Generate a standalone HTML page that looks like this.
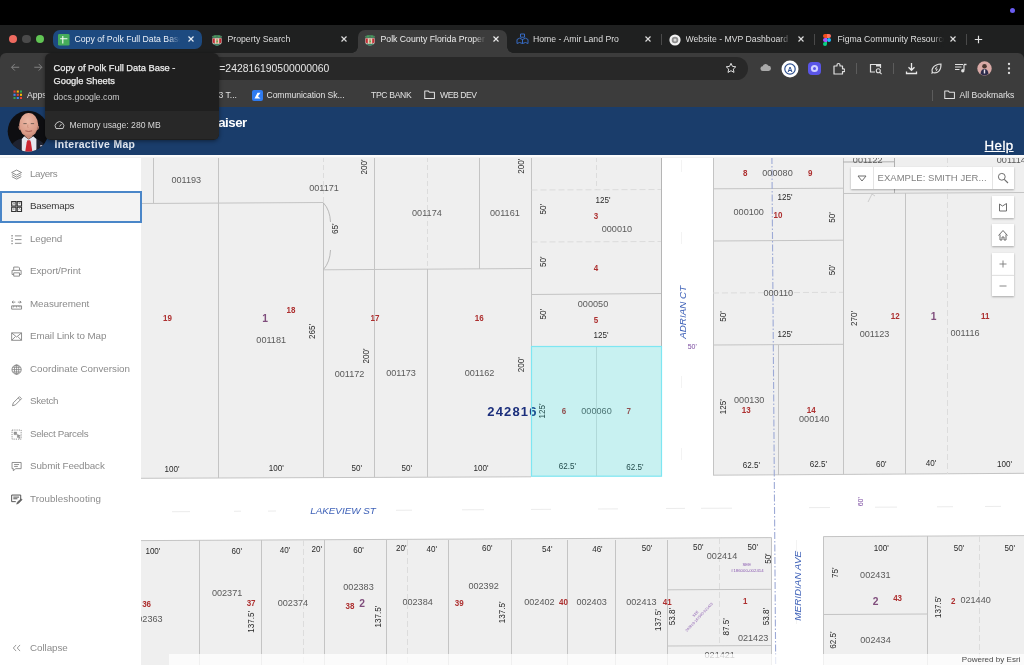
<!DOCTYPE html>
<html lang="en"><head><meta charset="utf-8"><title>Polk County Florida Property Appraiser - Interactive Map</title>
<style>
html,body{margin:0;padding:0;background:#fff;}
body{-webkit-font-smoothing:antialiased;width:1024px;height:665px;overflow:hidden;position:relative;font-family:"Liberation Sans",sans-serif;}
#root{position:absolute;left:0;top:0;width:1024px;height:665px;overflow:hidden;will-change:transform;}
.abs{position:absolute;}
#map{position:absolute;left:0;top:0;width:1024px;height:665px;}
#map text{font-family:"Liberation Sans",sans-serif;text-anchor:middle;}
.pn{font-size:9.6px;fill:#5a5a5a;}
.dm{font-size:8.6px;fill:#2a2a2a;}
.rd{font-size:9.2px;font-weight:bold;fill:#ad2f2f;}
.bk{font-size:10.8px;font-weight:bold;fill:#7f4d7c;}
.big{font-size:13px;font-weight:bold;fill:#1c2f7c;letter-spacing:1.15px;}
.st{font-size:9.85px;font-style:italic;fill:#3f62b8;}
.pw{font-size:7px;fill:#7a4aa0;}
.tiny{font-size:4.3px;fill:#8a5ab0;}
.tiny2{font-size:3.6px;fill:#8a5ab0;}
#side{position:absolute;left:0;top:157.5px;width:141px;height:508px;background:#fff;}
.sel{position:absolute;left:0;top:190.5px;width:137.5px;height:28px;border:2px solid #4a86c8;background:#f3f3f3;}
.sic{position:absolute;left:9.7px;}
.sit{position:absolute;left:30px;font:9.8px/16px "Liberation Sans",sans-serif;white-space:nowrap;}
.tab{position:absolute;top:33px;height:13px;font:8.7px/13px "Liberation Sans",sans-serif;color:#dedede;white-space:nowrap;overflow:hidden;}
.url{font:10.4px/13px "Liberation Sans",sans-serif;color:#e6e6e6;white-space:nowrap;}
.bm{position:absolute;top:89px;font:8.6px/12px "Liberation Sans",sans-serif;color:#e2e2e2;white-space:nowrap;}
.btn{position:absolute;left:992px;width:22px;height:22px;background:#fff;box-shadow:0 1px 2px rgba(0,0,0,.3);}
.btn svg{display:block;}
</style></head>
<body>
<div id="root">
<svg id="map" width="1024" height="665" viewBox="0 0 1024 665">
<rect x="0" y="155" width="1024" height="510" fill="#ffffff"/>
<polygon points="141,157 661,157 661,476.3 141,478.3" fill="#efefef" />
<polygon points="713,157 1024,157 1024,473.5 713,475" fill="#efefef" />
<polygon points="141,540.5 771.5,537.5 771.5,665 141,665" fill="#efefef" />
<polygon points="823.5,536.6 1024,535.6 1024,665 823.5,665" fill="#efefef" />
<line x1="596.5" y1="347" x2="596.5" y2="476" stroke="#d2d2d2" stroke-width="1"/>
<line x1="141" y1="478.3" x2="531" y2="476.8" stroke="#c4c4c4" stroke-width="1"/>
<line x1="153.5" y1="157" x2="153.5" y2="203" stroke="#c4c4c4" stroke-width="1"/>
<line x1="218.5" y1="157" x2="218.5" y2="478" stroke="#c4c4c4" stroke-width="1"/>
<line x1="141" y1="203.5" x2="323.5" y2="202.5" stroke="#c4c4c4" stroke-width="1"/>
<line x1="323.5" y1="157" x2="323.5" y2="203" stroke="#dcdcdc" stroke-width="1" stroke-dasharray="5 3"/>
<line x1="323.5" y1="203" x2="323.5" y2="477.5" stroke="#c4c4c4" stroke-width="1"/>
<path d="M323.5 203 Q330 210 330.5 222 M330.5 250 Q330 262 323.5 269.5" fill="none" stroke="#aaaaaa" stroke-width="0.8"/>
<line x1="323.5" y1="269.8" x2="531" y2="268.5" stroke="#c4c4c4" stroke-width="1"/>
<line x1="374.5" y1="157" x2="374.5" y2="477.3" stroke="#c4c4c4" stroke-width="1"/>
<line x1="427.5" y1="157" x2="427.5" y2="269" stroke="#dcdcdc" stroke-width="1" stroke-dasharray="5 3"/>
<line x1="427.5" y1="269" x2="427.5" y2="477" stroke="#c4c4c4" stroke-width="1"/>
<line x1="479.5" y1="157" x2="479.5" y2="269" stroke="#c4c4c4" stroke-width="1"/>
<line x1="531.5" y1="157" x2="531.5" y2="346" stroke="#c4c4c4" stroke-width="1"/>
<line x1="531.5" y1="190" x2="661" y2="189.5" stroke="#dcdcdc" stroke-width="1" stroke-dasharray="6 3"/>
<line x1="531.5" y1="242" x2="661" y2="241.5" stroke="#dcdcdc" stroke-width="1" stroke-dasharray="6 3"/>
<line x1="531.5" y1="294.5" x2="661" y2="293.5" stroke="#c4c4c4" stroke-width="1"/>
<line x1="596.5" y1="157" x2="596.5" y2="190" stroke="#dcdcdc" stroke-width="1" stroke-dasharray="5 3"/>
<line x1="661.5" y1="157" x2="661.5" y2="346" stroke="#b5b5b5" stroke-width="1"/>
<line x1="713.5" y1="157" x2="713.5" y2="475" stroke="#c4c4c4" stroke-width="1"/>
<line x1="713" y1="188.8" x2="843" y2="188.2" stroke="#c4c4c4" stroke-width="1"/>
<line x1="713" y1="241" x2="843" y2="240.2" stroke="#c4c4c4" stroke-width="1"/>
<line x1="713" y1="293" x2="843" y2="292.3" stroke="#dcdcdc" stroke-width="1" stroke-dasharray="6 3"/>
<line x1="713" y1="345" x2="843" y2="344.3" stroke="#c4c4c4" stroke-width="1"/>
<line x1="778.5" y1="345" x2="778.5" y2="475" stroke="#c4c4c4" stroke-width="1"/>
<line x1="713" y1="475.2" x2="1024" y2="473.3" stroke="#c4c4c4" stroke-width="1"/>
<line x1="843.5" y1="157" x2="843.5" y2="474.5" stroke="#c4c4c4" stroke-width="1"/>
<line x1="843" y1="193.5" x2="1024" y2="192.5" stroke="#c4c4c4" stroke-width="1"/>
<line x1="843" y1="162" x2="895" y2="161.8" stroke="#b0b0b0" stroke-width="1"/>
<line x1="894.5" y1="157" x2="894.5" y2="193" stroke="#b0b0b0" stroke-width="1"/>
<line x1="905.5" y1="193" x2="905.5" y2="474" stroke="#c4c4c4" stroke-width="1"/>
<line x1="947.5" y1="157" x2="947.5" y2="474" stroke="#dcdcdc" stroke-width="1" stroke-dasharray="6 3"/>
<path d="M868 202 L872 194 L875 196" fill="none" stroke="#c4c4c4" stroke-width="0.8"/>
<line x1="141" y1="540.6" x2="771.5" y2="537.6" stroke="#c4c4c4" stroke-width="1"/>
<line x1="199.5" y1="540" x2="199.5" y2="665" stroke="#c4c4c4" stroke-width="1"/>
<line x1="261.5" y1="540" x2="261.5" y2="665" stroke="#c4c4c4" stroke-width="1"/>
<line x1="324.5" y1="540" x2="324.5" y2="665" stroke="#c4c4c4" stroke-width="1"/>
<line x1="386.5" y1="540" x2="386.5" y2="665" stroke="#c4c4c4" stroke-width="1"/>
<line x1="448.5" y1="540" x2="448.5" y2="665" stroke="#c4c4c4" stroke-width="1"/>
<line x1="511.5" y1="540" x2="511.5" y2="665" stroke="#c4c4c4" stroke-width="1"/>
<line x1="567.5" y1="540" x2="567.5" y2="665" stroke="#c4c4c4" stroke-width="1"/>
<line x1="615.5" y1="540" x2="615.5" y2="665" stroke="#c4c4c4" stroke-width="1"/>
<line x1="667.5" y1="540" x2="667.5" y2="665" stroke="#c4c4c4" stroke-width="1"/>
<line x1="303.5" y1="540" x2="303.5" y2="665" stroke="#dcdcdc" stroke-width="1" stroke-dasharray="6 3"/>
<line x1="407.5" y1="540" x2="407.5" y2="665" stroke="#dcdcdc" stroke-width="1" stroke-dasharray="6 3"/>
<line x1="719.5" y1="538" x2="719.5" y2="646" stroke="#dcdcdc" stroke-width="1" stroke-dasharray="6 3"/>
<line x1="771.5" y1="537.5" x2="771.5" y2="665" stroke="#c4c4c4" stroke-width="1"/>
<line x1="667.5" y1="589.8" x2="771.5" y2="589.3" stroke="#c4c4c4" stroke-width="1"/>
<line x1="667.5" y1="646" x2="771.5" y2="645.5" stroke="#c4c4c4" stroke-width="1"/>
<line x1="823.5" y1="536.6" x2="1024" y2="535.6" stroke="#c4c4c4" stroke-width="1"/>
<line x1="823.5" y1="536.5" x2="823.5" y2="665" stroke="#c4c4c4" stroke-width="1"/>
<line x1="823.5" y1="614.5" x2="927.5" y2="614" stroke="#c4c4c4" stroke-width="1"/>
<line x1="927.5" y1="536" x2="927.5" y2="665" stroke="#c4c4c4" stroke-width="1"/>
<line x1="979.5" y1="536" x2="979.5" y2="665" stroke="#dcdcdc" stroke-width="1" stroke-dasharray="6 3"/>
<line x1="172" y1="511.71" x2="190" y2="511.6" stroke="#ececec" stroke-width="1"/>
<line x1="234" y1="511.31" x2="241" y2="511.2" stroke="#ececec" stroke-width="1"/>
<line x1="268" y1="511.11" x2="276" y2="511" stroke="#ececec" stroke-width="1"/>
<line x1="396" y1="510.31" x2="412" y2="510.2" stroke="#ececec" stroke-width="1"/>
<line x1="462" y1="509.81" x2="484" y2="509.7" stroke="#ececec" stroke-width="1"/>
<line x1="531" y1="509.40999999999997" x2="551" y2="509.3" stroke="#ececec" stroke-width="1"/>
<line x1="598" y1="509.01" x2="618" y2="508.9" stroke="#ececec" stroke-width="1"/>
<line x1="666" y1="508.51" x2="685" y2="508.4" stroke="#ececec" stroke-width="1"/>
<line x1="701" y1="508.31" x2="732" y2="508.2" stroke="#ececec" stroke-width="1"/>
<line x1="809" y1="507.61" x2="830" y2="507.5" stroke="#ececec" stroke-width="1"/>
<line x1="875" y1="507.21" x2="897" y2="507.1" stroke="#ececec" stroke-width="1"/>
<line x1="937" y1="506.81" x2="953" y2="506.7" stroke="#ececec" stroke-width="1"/>
<line x1="985" y1="506.51" x2="1001" y2="506.4" stroke="#ececec" stroke-width="1"/>
<line x1="681.5" y1="160" x2="681.5" y2="470" stroke="#f3f3f3" stroke-width="1" stroke-dasharray="12 60"/>
<line x1="796.5" y1="540" x2="796.5" y2="650" stroke="#f3f3f3" stroke-width="1" stroke-dasharray="12 60"/>
<line x1="771.9" y1="157" x2="775.7" y2="665" stroke="#9daad6" stroke-width="1.1" stroke-dasharray="7 2 1.5 2"/>
<text class="pn" transform="translate(186.25 183.19) scale(0.95 1)">001193</text>
<text class="pn" transform="translate(324 190.94) scale(0.95 1)">001171</text>
<text class="pn" transform="translate(426.9 215.94) scale(0.95 1)">001174</text>
<text class="pn" transform="translate(504.9 215.74) scale(0.95 1)">001161</text>
<text class="pn" transform="translate(616.9 232.14) scale(0.95 1)">000010</text>
<text class="pn" transform="translate(593 306.94) scale(0.95 1)">000050</text>
<text class="pn" transform="translate(271.2 343.44) scale(0.95 1)">001181</text>
<text class="pn" transform="translate(349.5 376.74) scale(0.95 1)">001172</text>
<text class="pn" transform="translate(401 376.24) scale(0.95 1)">001173</text>
<text class="pn" transform="translate(479.5 375.94) scale(0.95 1)">001162</text>
<text class="pn" transform="translate(596.5 414.14) scale(0.95 1)">000060</text>
<text class="pn" transform="translate(777.5 175.74) scale(0.95 1)">000080</text>
<text class="pn" transform="translate(748.7 214.74) scale(0.95 1)">000100</text>
<text class="pn" transform="translate(778.3 295.74) scale(0.95 1)">000110</text>
<text class="pn" transform="translate(749.2 403.14) scale(0.95 1)">000130</text>
<text class="pn" transform="translate(814.2 422.14) scale(0.95 1)">000140</text>
<text class="pn" transform="translate(867.7 162.64) scale(0.95 1)">001122</text>
<text class="pn" transform="translate(1011.3 162.74) scale(0.95 1)">001114</text>
<text class="pn" transform="translate(874.5 336.74) scale(0.95 1)">001123</text>
<text class="pn" transform="translate(965 335.94) scale(0.95 1)">001116</text>
<text class="pn" transform="translate(147.4 621.74) scale(0.95 1)">002363</text>
<text class="pn" transform="translate(227.1 596.34) scale(0.95 1)">002371</text>
<text class="pn" transform="translate(292.9 605.74) scale(0.95 1)">002374</text>
<text class="pn" transform="translate(358.5 589.74) scale(0.95 1)">002383</text>
<text class="pn" transform="translate(417.6 605.44) scale(0.95 1)">002384</text>
<text class="pn" transform="translate(483.6 589.34) scale(0.95 1)">002392</text>
<text class="pn" transform="translate(539.4 604.94) scale(0.95 1)">002402</text>
<text class="pn" transform="translate(591.6 604.94) scale(0.95 1)">002403</text>
<text class="pn" transform="translate(641.4 604.74) scale(0.95 1)">002413</text>
<text class="pn" transform="translate(722 559.14) scale(0.95 1)">002414</text>
<text class="pn" transform="translate(753.1 640.94) scale(0.95 1)">021423</text>
<text class="pn" transform="translate(719.7 657.74) scale(0.95 1)">021421</text>
<text class="pn" transform="translate(875.3 578.24) scale(0.95 1)">002431</text>
<text class="pn" transform="translate(875.5 642.74) scale(0.95 1)">002434</text>
<text class="pn" transform="translate(975.6 603.24) scale(0.95 1)">021440</text>
<text class="dm" transform="translate(603 202.58) scale(0.94 1)">125'</text>
<text class="dm" transform="translate(601 337.88) scale(0.94 1)">125'</text>
<text class="dm" transform="translate(567.5 469.18) scale(0.94 1)">62.5'</text>
<text class="dm" transform="translate(635 469.68) scale(0.94 1)">62.5'</text>
<text class="dm" transform="translate(172 471.78) scale(0.94 1)">100'</text>
<text class="dm" transform="translate(276.2 471.08) scale(0.94 1)">100'</text>
<text class="dm" transform="translate(481 470.88) scale(0.94 1)">100'</text>
<text class="dm" transform="translate(356.8 471.08) scale(0.94 1)">50'</text>
<text class="dm" transform="translate(406.8 470.88) scale(0.94 1)">50'</text>
<text class="dm" transform="translate(785 200.38) scale(0.94 1)">125'</text>
<text class="dm" transform="translate(785 336.58) scale(0.94 1)">125'</text>
<text class="dm" transform="translate(751.5 468.08) scale(0.94 1)">62.5'</text>
<text class="dm" transform="translate(818.5 467.38) scale(0.94 1)">62.5'</text>
<text class="dm" transform="translate(881.2 467.08) scale(0.94 1)">60'</text>
<text class="dm" transform="translate(931 465.58) scale(0.94 1)">40'</text>
<text class="dm" transform="translate(1004.5 467.08) scale(0.94 1)">100'</text>
<text class="dm" transform="translate(152.9 553.68) scale(0.94 1)">100'</text>
<text class="dm" transform="translate(236.7 553.58) scale(0.94 1)">60'</text>
<text class="dm" transform="translate(284.9 552.58) scale(0.94 1)">40'</text>
<text class="dm" transform="translate(316.8 551.98) scale(0.94 1)">20'</text>
<text class="dm" transform="translate(358.5 552.88) scale(0.94 1)">60'</text>
<text class="dm" transform="translate(401.3 551.48) scale(0.94 1)">20'</text>
<text class="dm" transform="translate(431.8 551.68) scale(0.94 1)">40'</text>
<text class="dm" transform="translate(487.2 551.38) scale(0.94 1)">60'</text>
<text class="dm" transform="translate(547.3 552.48) scale(0.94 1)">54'</text>
<text class="dm" transform="translate(597.4 551.68) scale(0.94 1)">46'</text>
<text class="dm" transform="translate(647 551.08) scale(0.94 1)">50'</text>
<text class="dm" transform="translate(698.2 550.28) scale(0.94 1)">50'</text>
<text class="dm" transform="translate(752.8 550.28) scale(0.94 1)">50'</text>
<text class="dm" transform="translate(881.2 550.78) scale(0.94 1)">100'</text>
<text class="dm" transform="translate(958.9 551.08) scale(0.94 1)">50'</text>
<text class="dm" transform="translate(1009.7 550.58) scale(0.94 1)">50'</text>
<text class="dm" transform="translate(367.08 167) rotate(-90) scale(0.94 1)">200'</text>
<text class="dm" transform="translate(523.88 166.2) rotate(-90) scale(0.94 1)">200'</text>
<text class="dm" transform="translate(369.38 356) rotate(-90) scale(0.94 1)">200'</text>
<text class="dm" transform="translate(524.28 364.8) rotate(-90) scale(0.94 1)">200'</text>
<text class="dm" transform="translate(338.08 228.8) rotate(-90) scale(0.94 1)">65'</text>
<text class="dm" transform="translate(315.08 331.5) rotate(-90) scale(0.94 1)">265'</text>
<text class="dm" transform="translate(546.48 209.2) rotate(-90) scale(0.94 1)">50'</text>
<text class="dm" transform="translate(546.28 261.8) rotate(-90) scale(0.94 1)">50'</text>
<text class="dm" transform="translate(546.28 314.2) rotate(-90) scale(0.94 1)">50'</text>
<text class="dm" transform="translate(545.08 411) rotate(-90) scale(0.94 1)">125'</text>
<text class="dm" transform="translate(835.08 217.5) rotate(-90) scale(0.94 1)">50'</text>
<text class="dm" transform="translate(835.48 270) rotate(-90) scale(0.94 1)">50'</text>
<text class="dm" transform="translate(725.58 316.5) rotate(-90) scale(0.94 1)">50'</text>
<text class="dm" transform="translate(726.08 406.8) rotate(-90) scale(0.94 1)">125'</text>
<text class="dm" transform="translate(856.88 318.5) rotate(-90) scale(0.94 1)">270'</text>
<text class="dm" transform="translate(253.68 621.8) rotate(-90) scale(0.94 1)">137.5'</text>
<text class="dm" transform="translate(380.58 616.6) rotate(-90) scale(0.94 1)">137.5'</text>
<text class="dm" transform="translate(505.28 612.4) rotate(-90) scale(0.94 1)">137.5'</text>
<text class="dm" transform="translate(661.48 620.1) rotate(-90) scale(0.94 1)">137.5'</text>
<text class="dm" transform="translate(941.48 607.2) rotate(-90) scale(0.94 1)">137.5'</text>
<text class="dm" transform="translate(675.18 616.6) rotate(-90) scale(0.94 1)">53.8'</text>
<text class="dm" transform="translate(769.38 616.6) rotate(-90) scale(0.94 1)">53.8'</text>
<text class="dm" transform="translate(729.18 626.9) rotate(-90) scale(0.94 1)">87.5'</text>
<text class="dm" transform="translate(771.08 558.6) rotate(-90) scale(0.94 1)">50'</text>
<text class="dm" transform="translate(838.08 572.8) rotate(-90) scale(0.94 1)">75'</text>
<text class="dm" transform="translate(835.98 640.1) rotate(-90) scale(0.94 1)">62.5'</text>
<text class="rd" transform="translate(167.4 321.29) scale(0.87 1)">19</text>
<text class="rd" transform="translate(291 313.29) scale(0.87 1)">18</text>
<text class="rd" transform="translate(375 321.29) scale(0.87 1)">17</text>
<text class="rd" transform="translate(479.2 321.29) scale(0.87 1)">16</text>
<text class="rd" transform="translate(596 219.49) scale(0.87 1)">3</text>
<text class="rd" transform="translate(596 271.29) scale(0.87 1)">4</text>
<text class="rd" transform="translate(596 323.29) scale(0.87 1)">5</text>
<text class="rd" transform="translate(564 414.49) scale(0.87 1)">6</text>
<text class="rd" transform="translate(628.8 414.29) scale(0.87 1)">7</text>
<text class="rd" transform="translate(745.2 176.49) scale(0.87 1)">8</text>
<text class="rd" transform="translate(810.2 176.29) scale(0.87 1)">9</text>
<text class="rd" transform="translate(778 218.29) scale(0.87 1)">10</text>
<text class="rd" transform="translate(746.2 413.49) scale(0.87 1)">13</text>
<text class="rd" transform="translate(811.2 412.99) scale(0.87 1)">14</text>
<text class="rd" transform="translate(895.2 318.89) scale(0.87 1)">12</text>
<text class="rd" transform="translate(985.2 318.69) scale(0.87 1)">11</text>
<text class="rd" transform="translate(146.6 606.69) scale(0.87 1)">36</text>
<text class="rd" transform="translate(251.1 606.19) scale(0.87 1)">37</text>
<text class="rd" transform="translate(350 608.79) scale(0.87 1)">38</text>
<text class="rd" transform="translate(459.3 605.59) scale(0.87 1)">39</text>
<text class="rd" transform="translate(563.4 605.29) scale(0.87 1)">40</text>
<text class="rd" transform="translate(667.2 605.09) scale(0.87 1)">41</text>
<text class="rd" transform="translate(745.2 604.39) scale(0.87 1)">1</text>
<text class="rd" transform="translate(897.6 600.89) scale(0.87 1)">43</text>
<text class="rd" transform="translate(953.3 604.09) scale(0.87 1)">2</text>
<text class="bk" transform="translate(265 322.37) scale(0.95 1)">1</text>
<text class="bk" transform="translate(933.6 319.67) scale(0.95 1)">1</text>
<text class="bk" transform="translate(362 606.77) scale(0.95 1)">2</text>
<text class="bk" transform="translate(875.6 604.67) scale(0.95 1)">2</text>
<text x="512.4" y="415.95" class="big" >242816</text>
<text x="343" y="514.33" class="st" >LAKEVIEW ST</text>
<text x="686.13" y="312.3" class="st" transform="rotate(-90 686.13 312.3)" >ADRIAN CT</text>
<text x="800.63" y="585.8" class="st" transform="rotate(-90 800.63 585.8)" >MERIDIAN AVE</text>
<text x="692.2" y="348.81" class="pw" >50'</text>
<text x="862.81" y="501.7" class="pw" transform="rotate(-90 862.81 501.7)" >60'</text>
<text x="746.8" y="566.2" class="tiny" >SEE</text>
<text x="747.3" y="571.5" class="tiny" >#186000-002414</text>
<text x="696.5" y="614.5" class="tiny2" transform="rotate(-47 696.5 614.5)" >SEE</text>
<text x="700" y="618" class="tiny2" transform="rotate(-47 700 618)" >242816-187500-021423</text>
<rect x="531.5" y="346.5" width="130" height="129.7" fill="rgba(0,255,255,0.16)" stroke="#7ee6f2" stroke-width="1.2"/>
</svg>

<div class="abs" style="left:851px;top:167px;width:163px;height:22px;background:#fff;box-shadow:0 1px 2px rgba(0,0,0,.3)"></div>
<div class="abs" style="left:872.5px;top:167px;width:1px;height:22px;background:#e4e4e4"></div>
<div class="abs" style="left:992px;top:167px;width:1px;height:22px;background:#e4e4e4"></div>
<svg class="abs" style="left:857px;top:174.5px" width="10" height="7" viewBox="0 0 10 7"><path d="M1 1h8L5 6z" fill="none" stroke="#6e6e6e" stroke-width="1"/></svg>
<div class="abs" style="left:877.5px;top:170.6px;color:#828282;font:9.5px/13px 'Liberation Sans',sans-serif;white-space:nowrap;letter-spacing:0.04px">EXAMPLE: SMITH JER...</div>
<svg class="abs" style="left:997px;top:172px" width="12" height="12" viewBox="0 0 12 12"><circle cx="4.8" cy="4.8" r="3.4" fill="none" stroke="#6e6e6e" stroke-width="1"/><path d="M7.3 7.3l3.7 3.7" stroke="#6e6e6e" stroke-width="1.1"/></svg>
<div class="btn" style="top:196px"><svg width="22" height="22" viewBox="0 0 22 22"><path d="M7.5 8l3 2 4-2.5V15h-7z" fill="none" stroke="#6e6e6e" stroke-width="1"/></svg></div>
<div class="btn" style="top:224px"><svg width="22" height="22" viewBox="0 0 22 22"><path d="M6.5 11.5L11 6.5l4.5 5M8 10.5V16h2v-3h2v3h2v-5.5" fill="none" stroke="#6e6e6e" stroke-width="1"/></svg></div>
<div class="btn" style="top:253px"><svg width="22" height="22" viewBox="0 0 22 22"><path d="M11 7.5v7M7.5 11h7" stroke="#7a7a7a" stroke-width="0.9"/></svg></div>
<div class="btn" style="top:275px;height:21px;border-top:1px solid #e2e2e2;box-sizing:border-box"><svg width="22" height="20" viewBox="0 1 22 20"><path d="M7.5 11h7" stroke="#7a7a7a" stroke-width="0.9"/></svg></div>
<div class="abs" style="left:169px;top:654px;width:855px;height:11px;background:rgba(255,255,255,0.74)"></div>
<div class="abs" style="left:961.8px;top:654.4px;color:#4a4a4a;font:8.05px/11px 'Liberation Sans',sans-serif;white-space:nowrap">Powered by Esri</div>

<div id="side"></div>
<div class="abs" style="left:0;top:0;width:141px;height:665px">
<svg class="sic" style="top:167.7px" width="13.2" height="13.2" viewBox="0 0 16 16"><path d="M8 2.5 L14 5.5 L8 8.5 L2 5.5 Z M2.3 8 L8 11 L13.7 8 M2.3 10.5 L8 13.5 L13.7 10.5" fill="none" stroke="#7a7a7a" stroke-width="1"/></svg>
<div class="sit" style="top:166px;color:#8b8b8b;letter-spacing:-0.353px">Layers</div>
<div class="sel"></div>
<svg class="sic" style="top:199.7px" width="13.2" height="13.2" viewBox="0 0 16 16"><path d="M2 2h5.2v5.2H2z M8.8 2H14v5.2H8.8z M2 8.8h5.2V14H2z M8.8 8.8H14V14H8.8z" fill="none" stroke="#333" stroke-width="1.3"/><path d="M3.5 5.5l1.2-1.5 1.2 1M10.5 4h2M3.5 11h2M10.5 11.5l1.2-1 1 1" fill="none" stroke="#333" stroke-width="0.8"/></svg>
<div class="sit" style="top:198px;color:#3a3a3a;letter-spacing:-0.257px">Basemaps</div>
<svg class="sic" style="top:232.7px" width="13.2" height="13.2" viewBox="0 0 16 16"><path d="M6 3.5h8M6 8h8M6 12.5h8" stroke="#7a7a7a" stroke-width="1" fill="none"/><path d="M2.5 2.5v11" stroke="#7a7a7a" stroke-width="1.4" stroke-dasharray="1.6 1.6" fill="none"/></svg>
<div class="sit" style="top:231px;color:#8b8b8b;letter-spacing:-0.077px">Legend</div>
<svg class="sic" style="top:264.7px" width="13.2" height="13.2" viewBox="0 0 16 16"><path d="M4.5 6V2.5h6l1 1V6 M4.5 11.5H2.5V6.5h11v5h-2 M4.5 9.5h7v4h-7z" fill="none" stroke="#7a7a7a" stroke-width="1"/></svg>
<div class="sit" style="top:263px;color:#8b8b8b;letter-spacing:-0.038px">Export/Print</div>
<svg class="sic" style="top:297.7px" width="13.2" height="13.2" viewBox="0 0 16 16"><path d="M2 9.5h12v4H2z M4 9.5v2M6 9.5v1.3M8 9.5v2M10 9.5v1.3M12 9.5v2 M2.5 5h4M9.5 5h4M4 3.5L2.5 5 4 6.5M12 3.5L13.5 5 12 6.5" fill="none" stroke="#7a7a7a" stroke-width="1"/></svg>
<div class="sit" style="top:296px;color:#8b8b8b;letter-spacing:-0.061px">Measurement</div>
<svg class="sic" style="top:329.7px" width="13.2" height="13.2" viewBox="0 0 16 16"><path d="M2 3.5h12v9H2z M2 3.5l6 5 6-5 M2 12.5l4.5-4.5 M14 12.5L9.5 8" fill="none" stroke="#7a7a7a" stroke-width="1"/></svg>
<div class="sit" style="top:328px;color:#8b8b8b;letter-spacing:-0.096px">Email Link to Map</div>
<svg class="sic" style="top:362.7px" width="13.2" height="13.2" viewBox="0 0 16 16"><circle cx="8" cy="8" r="5.6" fill="none" stroke="#7a7a7a" stroke-width="1"/><ellipse cx="8" cy="8" rx="2.6" ry="5.6" fill="none" stroke="#7a7a7a" stroke-width="0.9"/><path d="M2.4 8h11.2M3.2 5.2h9.6M3.2 10.8h9.6M8 2.4v11.2" stroke="#7a7a7a" stroke-width="0.9" fill="none"/></svg>
<div class="sit" style="top:361px;color:#8b8b8b;letter-spacing:-0.011px">Coordinate Conversion</div>
<svg class="sic" style="top:394.7px" width="13.2" height="13.2" viewBox="0 0 16 16"><path d="M3 13l1-3.5L11.5 2l2.5 2.5L6.5 12z M10 3.5L12.5 6" fill="none" stroke="#7a7a7a" stroke-width="1"/></svg>
<div class="sit" style="top:393px;color:#8b8b8b;letter-spacing:-0.286px">Sketch</div>
<svg class="sic" style="top:427.7px" width="13.2" height="13.2" viewBox="0 0 16 16"><path d="M2.5 2.5h11v11h-11z" fill="none" stroke="#7a7a7a" stroke-width="1" stroke-dasharray="1.5 1.2"/><path d="M5 5h3v3H5z M9 8l3.5 1.5-1.5.6 1 2-1 .5-1-2-1 1z" fill="#9a9a9a" stroke="#7a7a7a" stroke-width="0.6"/></svg>
<div class="sit" style="top:426px;color:#8b8b8b;letter-spacing:-0.314px">Select Parcels</div>
<svg class="sic" style="top:459.7px" width="13.2" height="13.2" viewBox="0 0 16 16"><path d="M2.5 3h11v7.5H7l-3 2.5v-2.5H2.5z M5 5.5h6M5 7.8h4.5" fill="none" stroke="#7a7a7a" stroke-width="1"/></svg>
<div class="sit" style="top:458px;color:#8b8b8b;letter-spacing:-0.102px">Submit Feedback</div>
<svg class="sic" style="top:492.7px" width="13.2" height="13.2" viewBox="0 0 16 16"><path d="M2 2.5h11v6M2 2.5v8h5 M4 5h7M4 7h5" fill="none" stroke="#555" stroke-width="1.2"/><path d="M8 13.5l1-2.5 4.5-4 1.2 1.2-4.2 4.3z" fill="#666" stroke="#555" stroke-width="0.6"/></svg>
<div class="sit" style="top:491px;color:#8b8b8b;letter-spacing:0.072px">Troubleshooting</div>
<svg class="sic" style="top:641px;left:9.5px" width="14" height="14" viewBox="0 0 16 16"><path d="M7 4.5L3.8 8 7 11.5M11.5 4.5L8.3 8l3.2 3.5" fill="none" stroke="#8c8c8c" stroke-width="1"/></svg>
<div class="sit" style="top:640px;color:#8b8b8b;letter-spacing:-0.055px">Collapse</div>
</div>

<div class="abs" style="left:0;top:0;width:1024px;height:25px;background:#000"></div>
<div class="abs" style="left:1010.3px;top:8.2px;width:5px;height:5px;border-radius:50%;background:#6a5cf2"></div>
<div class="abs" style="left:0;top:25px;width:1024px;height:40px;background:#1f2020"></div>
<div class="abs" style="left:0;top:53px;width:1024px;height:54px;background:#3c3c3c;border-radius:6px 6px 0 0"></div>
<div class="abs" style="left:8.6px;top:34.6px;width:8.6px;height:8.6px;border-radius:50%;background:#ee6a5f"></div>
<div class="abs" style="left:22.1px;top:34.6px;width:8.6px;height:8.6px;border-radius:50%;background:#4a4a4a"></div>
<div class="abs" style="left:35.7px;top:34.6px;width:8.6px;height:8.6px;border-radius:50%;background:#61c554"></div>

<!-- tab 1 (hovered) -->
<div class="abs" style="left:53px;top:30px;width:149px;height:18.5px;border-radius:7px;background:#1d4a80"></div>
<svg class="abs" style="left:58px;top:34px" width="11.5" height="11.5" viewBox="0 0 12 12"><rect width="12" height="12" rx="1.4" fill="#45ad5b"/><path d="M2.2 5h7.6M5 2.2v7.6" stroke="#f2fbf3" stroke-width="1.15"/></svg>
<div class="tab" style="left:74.5px;width:105px;color:#e8eef6">Copy of Polk Full Data Base</div>
<div class="abs" style="left:168px;top:31px;width:12px;height:17px;background:linear-gradient(90deg,rgba(29,74,128,0),#1d4a80)"></div>
<svg class="abs" style="left:186.5px;top:35.1px" width="8" height="8" viewBox="0 0 8 8"><path d="M1.5 1.5l5 5M6.5 1.5L1.5 6.5" stroke="#e6edf5" stroke-width="1.15" fill="none"/></svg>

<!-- tab 2 -->
<svg class="abs" style="left:210.5px;top:33.5px" width="12" height="12" viewBox="0 0 12 12"><path d="M0.8 2.2Q6 -0.4 11.2 2.2L10.2 4.6H1.8z" fill="#4a7d5c"/><path d="M1.4 4.2h9.2v4.2Q10.6 10.3 6 11.6 1.4 10.3 1.4 8.4z" fill="#efe6df"/><path d="M1.7 4.4h2.1v5.4L1.7 8.6z M8.2 4.4h2.1v4.2L8.2 9.8z" fill="#c42b32"/><path d="M4.7 4.6h2.6v5.2H4.7z" fill="#c9a27a"/><path d="M2.2 9.2Q6 10.8 9.8 9.2L8.6 11 6 11.9 3.4 11z" fill="#3f8468"/><circle cx="6.2" cy="7.3" r="0.8" fill="#3fae4f"/><circle cx="4" cy="2.3" r="0.8" fill="#43b35a"/><circle cx="8" cy="2.3" r="0.8" fill="#43b35a"/></svg>
<div class="tab" style="left:227.5px;width:110px">Property Search</div>
<svg class="abs" style="left:339.5px;top:35.1px" width="8" height="8" viewBox="0 0 8 8"><path d="M1.5 1.5l5 5M6.5 1.5L1.5 6.5" stroke="#dcdcdc" stroke-width="1.15" fill="none"/></svg>

<!-- tab 3 (active) -->
<div class="abs" style="left:358px;top:30px;width:148.5px;height:24px;border-radius:7px 7px 0 0;background:#3c3c3c"></div>
<div class="abs" style="left:352px;top:47px;width:6px;height:6px;background:radial-gradient(circle at 0 0,rgba(60,60,60,0) 5.5px,#3c3c3c 6px)"></div>
<div class="abs" style="left:506.5px;top:47px;width:6px;height:6px;background:radial-gradient(circle at 100% 0,rgba(60,60,60,0) 5.5px,#3c3c3c 6px)"></div>
<svg class="abs" style="left:364px;top:33.5px" width="12" height="12" viewBox="0 0 12 12"><path d="M0.8 2.2Q6 -0.4 11.2 2.2L10.2 4.6H1.8z" fill="#4a7d5c"/><path d="M1.4 4.2h9.2v4.2Q10.6 10.3 6 11.6 1.4 10.3 1.4 8.4z" fill="#efe6df"/><path d="M1.7 4.4h2.1v5.4L1.7 8.6z M8.2 4.4h2.1v4.2L8.2 9.8z" fill="#c42b32"/><path d="M4.7 4.6h2.6v5.2H4.7z" fill="#c9a27a"/><path d="M2.2 9.2Q6 10.8 9.8 9.2L8.6 11 6 11.9 3.4 11z" fill="#3f8468"/><circle cx="6.2" cy="7.3" r="0.8" fill="#3fae4f"/><circle cx="4" cy="2.3" r="0.8" fill="#43b35a"/><circle cx="8" cy="2.3" r="0.8" fill="#43b35a"/></svg>
<div class="tab" style="left:380.5px;width:104px;color:#ececec">Polk County Florida Property</div>
<div class="abs" style="left:474px;top:31px;width:12px;height:17px;background:linear-gradient(90deg,rgba(60,60,60,0),#3c3c3c)"></div>
<svg class="abs" style="left:492px;top:35.1px" width="8" height="8" viewBox="0 0 8 8"><path d="M1.5 1.5l5 5M6.5 1.5L1.5 6.5" stroke="#ececec" stroke-width="1.15" fill="none"/></svg>

<!-- tab 4 -->
<svg class="abs" style="left:516px;top:33px" width="13" height="12" viewBox="0 0 13 12"><path d="M4.5 1h4v3.2h-4z M1 6.5l2.5-1.3 3 1.3v4L3.5 9.5 1 10.5z M6.5 6.5l3-1.3 2.5 1.3v4l-2.5-1-3 1z" fill="none" stroke="#376bc4" stroke-width="1"/></svg>
<div class="tab" style="left:533px;width:108px">Home - Amir Land Pro</div>
<svg class="abs" style="left:644px;top:35.1px" width="8" height="8" viewBox="0 0 8 8"><path d="M1.5 1.5l5 5M6.5 1.5L1.5 6.5" stroke="#dcdcdc" stroke-width="1.15" fill="none"/></svg>
<div class="abs" style="left:661px;top:34px;width:1px;height:11px;background:#4a4a4a"></div>

<!-- tab 5 -->
<svg class="abs" style="left:668.5px;top:33.5px" width="12" height="12" viewBox="0 0 12 12"><circle cx="6" cy="6" r="5.6" fill="#f2f2f2"/><circle cx="6" cy="6" r="3.3" fill="#8e8e8e"/><circle cx="6" cy="6" r="1.5" fill="#d8d8d8"/></svg>
<div class="tab" style="left:685.5px;width:104px">Website - MVP Dashboard</div>
<div class="abs" style="left:779px;top:31px;width:12px;height:17px;background:linear-gradient(90deg,rgba(31,32,32,0),#1f2020)"></div>
<svg class="abs" style="left:796.5px;top:35.1px" width="8" height="8" viewBox="0 0 8 8"><path d="M1.5 1.5l5 5M6.5 1.5L1.5 6.5" stroke="#dcdcdc" stroke-width="1.15" fill="none"/></svg>
<div class="abs" style="left:814px;top:34px;width:1px;height:11px;background:#4a4a4a"></div>

<!-- tab 6 -->
<svg class="abs" style="left:822.5px;top:33.5px" width="8" height="12" viewBox="0 0 8 12"><path d="M0 2a2 2 0 012-2h2v4H2a2 2 0 01-2-2z" fill="#f24e1e"/><path d="M4 0h2a2 2 0 010 4H4z" fill="#ff7262"/><path d="M0 6a2 2 0 012-2h2v4H2a2 2 0 01-2-2z" fill="#a259ff"/><circle cx="6" cy="6" r="2" fill="#1abcfe"/><path d="M0 10a2 2 0 012-2h2v2a2 2 0 01-4 0z" fill="#0acf83"/></svg>
<div class="tab" style="left:837.5px;width:106px">Figma Community Resources</div>
<div class="abs" style="left:932px;top:31px;width:12px;height:17px;background:linear-gradient(90deg,rgba(31,32,32,0),#1f2020)"></div>
<svg class="abs" style="left:949px;top:35.1px" width="8" height="8" viewBox="0 0 8 8"><path d="M1.5 1.5l5 5M6.5 1.5L1.5 6.5" stroke="#dcdcdc" stroke-width="1.15" fill="none"/></svg>
<div class="abs" style="left:966px;top:34px;width:1px;height:11px;background:#4a4a4a"></div>
<svg class="abs" style="left:973.5px;top:34.5px" width="9" height="9" viewBox="0 0 9 9"><path d="M4.5 0.8v7.4M0.8 4.5h7.4" stroke="#e2e2e2" stroke-width="1.2"/></svg>

<!-- toolbar -->
<svg class="abs" style="left:10.3px;top:62.3px" width="10.5" height="10.5" viewBox="0 0 12 12"><path d="M10.5 6H2M5.5 2.2L1.8 6l3.7 3.8" fill="none" stroke="#858585" stroke-width="1.1"/></svg>
<svg class="abs" style="left:33.3px;top:62.3px" width="10.5" height="10.5" viewBox="0 0 12 12"><path d="M1.5 6H10M6.5 2.2L10.2 6 6.5 9.8" fill="none" stroke="#858585" stroke-width="1.1"/></svg>
<div class="abs" style="left:80px;top:57px;width:667.5px;height:23px;border-radius:11.5px;background:#282828"></div>
<div class="abs url" style="left:219.3px;top:61.5px">=242816190500000060</div>
<svg class="abs" style="left:725px;top:62px" width="12" height="12" viewBox="0 0 12 12"><path d="M6 1.3l1.45 3.1 3.35.4-2.5 2.3.7 3.3L6 8.7 3 10.4l.7-3.3-2.5-2.3 3.35-.4z" fill="none" stroke="#e0e0e0" stroke-width="1"/></svg>
<svg class="abs" style="left:760px;top:63.3px" width="10.8" height="9.2" viewBox="0 0 13 11"><path d="M3.5 9.5a2.8 2.8 0 01-.3-5.6A3.6 3.6 0 0110 3.4a3 3 0 01.3 6.1z" fill="#a9a9a9"/></svg>
<svg class="abs" style="left:781px;top:59.5px" width="18" height="18" viewBox="0 0 18 18"><circle cx="9" cy="9" r="8.5" fill="#fff"/><circle cx="9" cy="9" r="5.2" fill="none" stroke="#2d4f8f" stroke-width="1.2"/><text x="9" y="11.6" text-anchor="middle" font-family="Liberation Sans, sans-serif" font-size="7" font-weight="bold" fill="#2d4f8f">A</text></svg>
<svg class="abs" style="left:807.5px;top:62px" width="13" height="13" viewBox="0 0 13 13"><rect width="13" height="13" rx="4" fill="#5a55e8"/><circle cx="6.5" cy="6.5" r="3.6" fill="#cfd0ff"/><circle cx="6.5" cy="6.5" r="1.5" fill="#5a55e8"/></svg>
<svg class="abs" style="left:832px;top:61.5px" width="13" height="13" viewBox="0 0 13 13"><path d="M2 4h3V3a1.5 1.5 0 013 0v1h2.5v2.8h1a1.4 1.4 0 010 2.8h-1V12H2z" fill="none" stroke="#e0e0e0" stroke-width="1.2" stroke-linejoin="round"/></svg>
<div class="abs" style="left:856px;top:63px;width:1px;height:11px;background:#5c5c5c"></div>
<svg class="abs" style="left:868.5px;top:62.5px" width="14" height="12" viewBox="0 0 14 12"><path d="M6 9H1.5V1.5h10V5" fill="none" stroke="#e0e0e0" stroke-width="1.2"/><rect x="7" y="1.5" width="4.5" height="2" fill="#e0e0e0"/><circle cx="9.3" cy="7.8" r="2" fill="none" stroke="#e0e0e0" stroke-width="1.1"/><path d="M10.8 9.3l1.8 1.8" stroke="#e0e0e0" stroke-width="1.1"/></svg>
<div class="abs" style="left:893px;top:63px;width:1px;height:11px;background:#5c5c5c"></div>
<svg class="abs" style="left:905px;top:62px" width="13" height="13" viewBox="0 0 13 13"><path d="M6.5 1v7M3.5 5.3l3 3 3-3M1.5 9.5v2h10v-2" fill="none" stroke="#e8e8e8" stroke-width="1.3"/></svg>
<svg class="abs" style="left:930px;top:62px" width="13" height="13" viewBox="0 0 13 13"><path d="M2.5 10.5c-1.5-3.5 1-8 8.5-8.5.3 6-3 10-8.5 8.5z M1.5 11.5l1.5-1.5" fill="none" stroke="#e0e0e0" stroke-width="1.1"/><path d="M7 4.5L5.3 7h2L6 9.3" fill="none" stroke="#e0e0e0" stroke-width="0.9"/></svg>
<svg class="abs" style="left:953.5px;top:62px" width="13" height="12" viewBox="0 0 13 12"><path d="M1 2.5h8M1 5h6.5M1 7.5h4.5" stroke="#e0e0e0" stroke-width="1.2"/><path d="M10 2.5v5.5" stroke="#e0e0e0" stroke-width="1.2"/><path d="M10 2.5h2.5" stroke="#e0e0e0" stroke-width="1.4"/><circle cx="8.8" cy="8.8" r="1.7" fill="#e0e0e0"/></svg>
<svg class="abs" style="left:977px;top:61px" width="15" height="15" viewBox="0 0 15 15"><circle cx="7.5" cy="7.5" r="7.2" fill="#d9a9a6"/><path d="M3.5 13c.3-3.5 1.5-5 4-5s3.7 1.5 4 5a7 7 0 01-8 0z" fill="#2b2a4a"/><circle cx="7.5" cy="5.3" r="2.3" fill="#4a3630"/><path d="M6.8 8.5h1.4v4H6.8z" fill="#e8e0e8"/></svg>
<svg class="abs" style="left:1007px;top:62px" width="4" height="13" viewBox="0 0 4 13"><circle cx="2" cy="2" r="1.15" fill="#e0e0e0"/><circle cx="2" cy="6.5" r="1.15" fill="#e0e0e0"/><circle cx="2" cy="11" r="1.15" fill="#e0e0e0"/></svg>

<!-- bookmarks bar -->
<svg class="abs" style="left:12.6px;top:89.7px" width="9.6" height="9.6" viewBox="0 0 10 10"><g><rect x="0.5" y="0.5" width="2.2" height="2.2" fill="#ea4335"/><rect x="3.9" y="0.5" width="2.2" height="2.2" fill="#fbbc05"/><rect x="7.3" y="0.5" width="2.2" height="2.2" fill="#34a853"/><rect x="0.5" y="3.9" width="2.2" height="2.2" fill="#4285f4"/><rect x="3.9" y="3.9" width="2.2" height="2.2" fill="#ea4335"/><rect x="7.3" y="3.9" width="2.2" height="2.2" fill="#fbbc05"/><rect x="0.5" y="7.3" width="2.2" height="2.2" fill="#34a853"/><rect x="3.9" y="7.3" width="2.2" height="2.2" fill="#4285f4"/><rect x="7.3" y="7.3" width="2.2" height="2.2" fill="#ea4335"/></g></svg>
<div class="bm" style="left:27px">Apps</div>
<div class="bm" style="left:218.5px">3 T...</div>
<svg class="abs" style="left:251.5px;top:90px" width="11" height="11" viewBox="0 0 11 11"><rect width="11" height="11" rx="2" fill="#2f7bf0"/><path d="M2.5 8.5L5.5 2.8h3L6 6.3l2.5 2.2z" fill="#fff"/></svg>
<div class="bm" style="left:266.5px;letter-spacing:-0.07px">Communication Sk...</div>
<div class="bm" style="left:371px;letter-spacing:-0.33px">TPC BANK</div>
<svg class="abs" style="left:423.6px;top:90.3px" width="11.2" height="9.3" viewBox="0 0 12 10"><path d="M0.8 1h3.7l1.2 1.3h5.5v6.9H0.8z" fill="none" stroke="#e0e0e0" stroke-width="1.1" stroke-linejoin="round"/></svg>
<div class="bm" style="left:440px;letter-spacing:-0.45px">WEB DEV</div>
<div class="abs" style="left:932px;top:90px;width:1px;height:11px;background:#5c5c5c"></div>
<svg class="abs" style="left:943.6px;top:90.3px" width="11.2" height="9.3" viewBox="0 0 12 10"><path d="M0.8 1h3.7l1.2 1.3h5.5v6.9H0.8z" fill="none" stroke="#e0e0e0" stroke-width="1.1" stroke-linejoin="round"/></svg>
<div class="bm" style="left:959.5px">All Bookmarks</div>


<div class="abs" style="left:0;top:107.4px;width:1024px;height:47.4px;background:#1a3d6b"></div>
<div class="abs" style="left:0;top:155px;width:1024px;height:2px;background:#fcfcfc"></div><div class="abs" style="left:0;top:157px;width:1024px;height:1px;background:#f1f1f1"></div>
<svg class="abs" style="left:7px;top:109px" width="43" height="45" viewBox="7 109 43 45">
 <defs><clipPath id="av"><circle cx="28.1" cy="131.2" r="20.4"/></clipPath>
 <radialGradient id="fc" cx="0.45" cy="0.35" r="0.75"><stop offset="0" stop-color="#ecb9a6"/><stop offset="0.7" stop-color="#d99a86"/><stop offset="1" stop-color="#b87a68"/></radialGradient></defs>
 <g clip-path="url(#av)">
  <rect x="7" y="109" width="43" height="45" fill="#0e0e11"/>
  <path d="M9 154c0.5-9 5-13.5 12.5-15.5h13c7.5 2 12 6.5 12.5 15.5z" fill="#1e2230"/>
  <path d="M24.2 136.3l4.5 3.2 4.5-3.2 3.2 2.7v15h-14.6v-15z" fill="#e4e6ee"/><path d="M25.2 131h7v5.6l-3.5 2.6-3.5-2.6z" fill="#c98b78"/>
  <path d="M27.4 140.3h2.8l0.7 2 1.7 10.7-3.8 2.5-3.8-2.5 1.7-10.7z" fill="#cc2531"/>
  <ellipse cx="28.7" cy="124.8" rx="9.5" ry="11.9" fill="url(#fc)"/>
  <path d="M19.4 125.5q-1.2 0.2-0.8 2.6 0.5 2 1.5 2.2z M38 125.5q1.2 0.2 0.8 2.6-0.5 2-1.5 2.2z" fill="#d39380"/>
  <path d="M23.4 123.6h3.3M30.8 123.6h3.3" stroke="#6d5a50" stroke-width="0.9"/>
  <path d="M25.3 130.8q3.4 1.4 6.8 0" stroke="#a2574f" stroke-width="0.9" fill="none"/>
  <path d="M27.9 124.5q-0.7 2.6 0.3 3.4" stroke="#c58674" stroke-width="0.7" fill="none"/>
  <rect x="40.2" y="145.2" width="2.3" height="1.3" fill="#d8d4e6"/>
 </g>
</svg>
<div class="abs" style="right:777.3px;top:114px;color:#fff;font:bold 13.2px/18px 'Liberation Sans',sans-serif;white-space:nowrap;letter-spacing:-0.45px">Property Appraiser</div>
<div class="abs" style="left:54.6px;top:137.6px;color:#e4eaf3;font:bold 10.4px/13px 'Liberation Sans',sans-serif;white-space:nowrap;letter-spacing:0.33px">Interactive Map</div>
<div class="abs" style="left:984.6px;top:138px;color:#fff;font:13.3px/15px 'Liberation Sans',sans-serif;-webkit-text-stroke:0.3px #fff;text-decoration:underline;white-space:nowrap;letter-spacing:0.42px">Help</div>


<div class="abs" style="left:45px;top:53px;width:173.5px;height:87px;border-radius:6px;background:#1f1f1f;box-shadow:0 1px 4px rgba(0,0,0,.45);overflow:hidden">
 <div class="abs" style="left:0;top:57.5px;width:174px;height:28px;background:#282828"></div>
 <div class="abs" style="left:8.5px;top:8.6px;color:#ececec;font:9.3px/13.6px 'Liberation Sans',sans-serif;white-space:nowrap;-webkit-text-stroke:0.25px #ececec">Copy of Polk Full Data Base -<br>Google Sheets</div>
 <div class="abs" style="left:8.5px;top:38.5px;color:#c9c9c9;font:8.75px/11px 'Liberation Sans',sans-serif;white-space:nowrap">docs.google.com</div>
 <svg class="abs" style="left:9px;top:67px" width="11" height="10" viewBox="0 0 11 10"><path d="M2 8.5a4.3 4.3 0 117 0z" fill="none" stroke="#c4c4c4" stroke-width="1"/><path d="M5.5 6.5l2-2.5" stroke="#c4c4c4" stroke-width="1"/></svg>
 <div class="abs" style="left:24.5px;top:66.5px;color:#d6d6d6;font:8.6px/11px 'Liberation Sans',sans-serif;white-space:nowrap">Memory usage: 280 MB</div>
</div>

</div>
</body></html>
